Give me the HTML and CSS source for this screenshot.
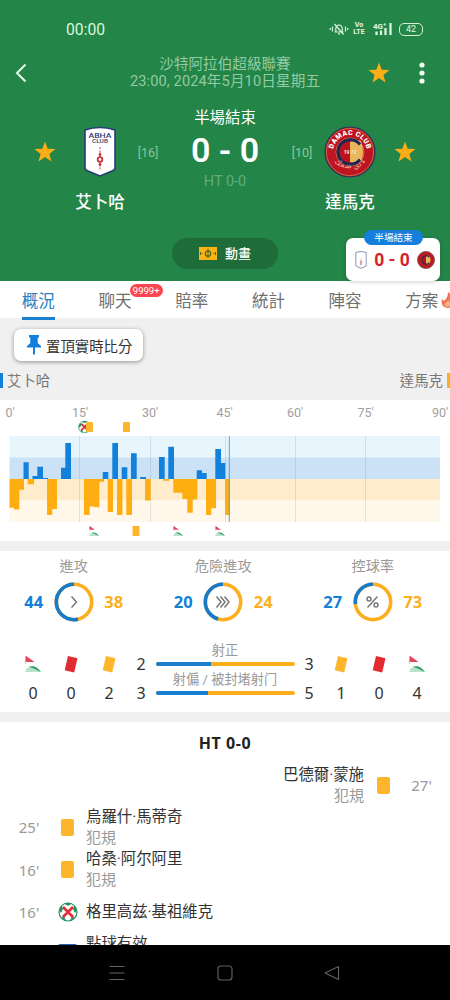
FILE: index.html
```html
<!DOCTYPE html>
<html lang="zh-Hant">
<head>
    <meta charset="UTF-8">
    <meta name="viewport" content="width=device-width, initial-scale=1.0">
    <title>艾卜哈 0 - 0 達馬克</title>
    <link rel="stylesheet" href="styles.css">
</head>
<body>
    <!-- shared icons -->
    <svg class="defs" width="0" height="0">
        <symbol id="star" viewBox="0 0 22 22">
            <path d="M11 0.5l2.7 7.3 7.8.3-6.1 4.8 2.1 7.6-6.5-4.4-6.5 4.4 2.1-7.6L.5 8.1l7.8-.3z" fill="#fdae17"/>
        </symbol>
        <symbol id="abha" viewBox="0 0 34 52">
            <path d="M2 4Q17-1 32 4V42Q32 44 29 45L17 50 5 45Q2 44 2 42Z" fill="#fff" stroke="#283a78" stroke-width="1.6"/>
            <path d="M17 21V45" stroke="#c9444a" stroke-width="1" stroke-dasharray="2 1.4"/>
            <path d="M17 26l1.500 2.500-1.500 2.500-1.500-2.500zM17 36l1.500 2.500-1.500 2.500-1.500-2.500z" fill="#c9343c"/>
            <circle cx="17" cy="33.500" r="2.300" fill="#fff" stroke="#c9343c" stroke-width="1.800"/>
        </symbol>
        <symbol id="damac" viewBox="0 0 52 52">
            <circle cx="26" cy="26" r="25" fill="#bd1620" stroke="#243a5c" stroke-width="1.2"/>
            <circle cx="26" cy="26" r="23.600" fill="none" stroke="#cf7650" stroke-width=".8"/>
            <circle cx="26" cy="26" r="14" fill="#b8141f" stroke="#d77a45" stroke-width="1"/>
            <path d="M26 16a12 12 0 0 1 11-1q4 11 0 21-5 2-11 0z" fill="#e9b65b"/>
            <path d="M36 18.500a12.300 12.300 0 1 0 0 15" fill="none" stroke="#1e2856" stroke-width="3"/>
        </symbol>
        <symbol id="corner" viewBox="0 0 18 18">
            <path d="M1.500.5L10.500 7H1.500z" fill="#e0475a"/>
            <path d="M1.500 1v8" stroke="#d9a9ad" stroke-width=".8"/>
            <path d="M1 17Q3 11 8 11T17 17z" fill="#b9e3cb"/>
            <path d="M5 11.800q7-2 12 5.200-6-3-12-5.200z" fill="#38a169"/>
        </symbol>
        <symbol id="card" viewBox="0 0 14 18">
            <path d="M4 1l9.500 2.200-3.300 14.300L.7 15.300z" fill="currentColor"/>
        </symbol>
        <symbol id="miss" viewBox="0 0 20 20">
            <circle cx="10" cy="10" r="9" fill="#fff" stroke="#1d9160" stroke-width="1.200"/>
            <path d="M6 1.800l4 2 4-2-4-1zM1 8l3-4 1 3-2 4zM19 8l-3-4-1 3 2 4zM4 17l1-4 3 5zM16 17l-1-4-3 5z" fill="#1d9160"/>
            <path d="M5 5l10 10M15 5L5 15" stroke="#e23239" stroke-width="2.800"/>
        </symbol>
    </svg>

    <div class="screen">
        <header class="header">
            <div class="status-bar">
                <span class="clock">00:00</span>
                <div class="status-icons">
                    <svg width="20" height="14" viewBox="0 0 20 14" fill="none" stroke="#d9f3df" stroke-width="1.200">
                        <path d="M5.500 10h9M6.800 10V6.500Q7 3.200 10 3q3 .2 3.200 3.500V10M9 11.800h2M5.500 2l9 10.500M3.500 4.500v5M1.300 6v2M16.500 4.500v5M18.700 6v2"/>
                    </svg>
                    <span class="volte"><b>Vo</b><b>LTE</b></span>
                    <svg class="signal" width="20" height="14" viewBox="0 0 20 14">
                        <text x="0" y="6.500" font-size="8" font-weight="700" fill="#e2f7e6">4G⁺</text>
                        <path d="M3.500 13v-3.500M8 13V8.500M12.500 13V6M17.500 13V1" stroke="#e2f7e6" stroke-width="2.200"/>
                    </svg>
                    <span class="battery">42</span>
                </div>
            </div>

            <div class="top-bar">
                <svg class="back" width="12" height="20" viewBox="0 0 12 20"><path d="M10.500 1.500L2 10l8.500 8.500" fill="none" stroke="#e8f8ea" stroke-width="2"/></svg>
                <div class="league">
                    <div>沙特阿拉伯超級聯賽</div>
                    <div class="kickoff">23:00, 2024年5月10日星期五</div>
                </div>
                <svg width="22" height="22"><use href="#star"/></svg>
                <svg class="more" width="6" height="22" fill="#f2fff2"><circle cx="3" cy="3" r="2.600"/><circle cx="3" cy="11" r="2.600"/><circle cx="3" cy="19" r="2.600"/></svg>
            </div>

            <div class="match">
                <svg class="fav" width="22" height="22"><use href="#star"/></svg>
                <div class="team">
                    <svg width="34" height="52" viewBox="0 0 34 52">
                        <use href="#abha"/>
                        <text x="17" y="12" font-size="7.500" font-weight="500" text-anchor="middle" textLength="23" lengthAdjust="spacingAndGlyphs" fill="#33427a">ABHA</text>
                        <text x="17" y="17" font-size="5" font-weight="500" text-anchor="middle" textLength="16" lengthAdjust="spacingAndGlyphs" fill="#33427a">CLUB</text>
                    </svg>
                    <div class="team-name">艾卜哈</div>
                </div>
                <div class="rank">[16]</div>
                <div class="result">
                    <div class="period">半場結束</div>
                    <div class="score">0 - 0</div>
                    <div class="half">HT 0-0</div>
                </div>
                <div class="rank">[10]</div>
                <div class="team">
                    <svg width="52" height="52" viewBox="0 0 52 52">
                        <path id="arc-top" d="M9 26a17 17 0 0 1 34 0" fill="none"/>
                        <path id="arc-bottom" d="M6 28a21 21 0 0 0 40 0" fill="none"/>
                        <use href="#damac"/>
                        <text x="26" y="28" font-size="5" font-weight="700" text-anchor="middle" fill="#f8e6cc">19 72</text>
                        <text font-size="7" font-weight="900" fill="#fff"><textPath href="#arc-top" startOffset="50%" text-anchor="middle" textLength="47">DAMAC CLUB</textPath></text>
                        <text font-size="8" fill="#f0a8a4"><textPath href="#arc-bottom" startOffset="50%" text-anchor="middle">نادي ضمك</textPath></text>
                    </svg>
                    <div class="team-name">達馬克</div>
                </div>
                <svg class="fav" width="22" height="22"><use href="#star"/></svg>
            </div>

            <div class="animation">
                <svg width="18" height="13" viewBox="0 0 18 13"><path d="M0 0h18v13H0z" fill="#fdb515"/><path d="M9 1.500v10M1.500 5v3M3 5.800v1.400M16.500 5v3M15 5.800v1.400" fill="none" stroke="#50671f"/><circle cx="9" cy="6.500" r="2.700" fill="none" stroke="#50671f" stroke-width="1.300"/></svg>
                <span>動畫</span>
            </div>

            <div class="mini">
                <span class="mini-label">半場結束</span>
                <svg width="12" height="18"><use href="#abha"/></svg>
                <span class="mini-score">0 - 0</span>
                <svg width="18" height="18"><use href="#damac"/></svg>
            </div>
        </header>

        <nav class="tabs">
            <div class="tab active"><span>概況</span></div>
            <div class="tab"><span>聊天</span><em>9999+</em></div>
            <div class="tab"><span>賠率</span></div>
            <div class="tab"><span>統計</span></div>
            <div class="tab"><span>陣容</span></div>
            <div class="tab"><span>方案</span>
                <svg class="flame" width="14" height="18" viewBox="0 0 14 18"><path d="M7 1q4 3 3 6l2-1q4 10-5 11Q-1 16 1 8l2 2Q7 7 7 1z" fill="#f1744b"/><path d="M7 8q1 3 3 4-1 4-4 4-4-1-2-4 3-1 3-4z" fill="#f7b08c"/></svg>
            </div>
        </nav>

        <section class="pin-area">
            <div class="pin">
                <svg width="14" height="20" viewBox="0 0 14 20"><path d="M2 0h10v2l-1.300 1v5l3.300 3v1.500H8V19l-1 1-1-1v-6.500H0V11l3.300-3V3L2 2z" fill="#1180dc"/></svg>
                <span>置頂實時比分</span>
            </div>
            <div class="sides">
                <span class="home">艾卜哈</span>
                <span class="away">達馬克</span>
            </div>
        </section>

        <section class="chart">
            <svg width="450" height="141" viewBox="0 400 450 141">
                <g class="axis">
                    <text x="10" y="417">0'</text>
                    <text x="80" y="417">15'</text>
                    <text x="150" y="417">30'</text>
                    <text x="224.500" y="417">45'</text>
                    <text x="295" y="417">60'</text>
                    <text x="365.500" y="417">75'</text>
                    <text x="440" y="417">90'</text>
                </g>
                <path d="M9.500 436H440v22H9.500z" fill="#e9f5fd"/>
                <path d="M9.500 457.500H440V479H9.500z" fill="#cbe2f6"/>
                <path d="M9.500 479H440v21.500H9.500z" fill="#feeccd"/>
                <path d="M9.500 500.500H440V522H9.500z" fill="#fff8ea"/>
                <path d="M79.500 436v86M150.500 436v86M225.500 436v86M295.500 436v86M365.500 436v86" stroke="#506478" stroke-opacity=".15"/>
                <!-- home pressure -->
                <path fill="#1181dc" d="M23.500 479V462.300H28.700V479zM32.500 479V476H37.300V466.700H43V478H48V479zM61 479V467.700H65.300V443H71V479zM102.700 479V472H108.300V479zM112.300 479V443H118V479zM121.700 479V467.300H127.300V479zM131 479V453.300H136.700V479zM140.300 479V477H146V479zM159 479V457H164.700V479zM168.300 479V446.700H174V479zM196.700 479V470.300H202V473H206.700V479zM215.300 479V449H221V463H225.300V479z"/>
                <!-- away pressure -->
                <path fill="#ffae12" d="M9.500 479V507.700H14V509.500H19.300V489.700H24V479zM27.700 479V484.300H34V479zM47 479V515H52.300V509H57V479zM84 479V515H89.700V506.500H94.300V507.300H99.300V481.700H104V479zM107.700 479V512H113V479zM117 479V515H122.500V479zM126.300 479V515H132V479zM145 479V500.500H150.700V479zM163.300 479V480.700H169.300V479zM173.300 479V492.700H182.300V499H187.300V512.700H192.700V499.500H197.300V479zM206 479V515H211.300V508.300H216V479zM225 479V515H230V479z"/>
                <path d="M229.300 436v86" stroke="#5ba3dc"/>
                <use href="#miss" x="78" y="420.500" width="13" height="13"/>
                <g fill="#fdb62b">
                    <rect x="86" y="422" width="7" height="10" rx="1"/>
                    <rect x="123" y="422" width="7" height="10" rx="1"/>
                    <rect x="132.500" y="526" width="7" height="10" rx="1"/>
                </g>
                <use href="#corner" x="88.500" y="525.500" width="11" height="11"/>
                <use href="#corner" x="172.500" y="525.500" width="11" height="11"/>
                <use href="#corner" x="214.500" y="525.500" width="11" height="11"/>
            </svg>
        </section>

        <section class="stats">
            <div class="gauges">
                <div class="gauge">
                    <h3>進攻</h3>
                    <b class="blue">44</b>
                    <svg width="40" height="40" viewBox="0 0 40 40">
                        <circle class="ring" cx="20" cy="20" r="17.700"/>
                        <circle class="ring part" cx="20" cy="20" r="17.700" pathLength="100" stroke-dasharray="53.700 100"/>
                        <path class="mark" d="M17.500 14.500l5 5.500-5 5.500"/>
                    </svg>
                    <b class="gold">38</b>
                </div>
                <div class="gauge">
                    <h3>危險進攻</h3>
                    <b class="blue">20</b>
                    <svg width="40" height="40" viewBox="0 0 40 40">
                        <circle class="ring" cx="20" cy="20" r="17.700"/>
                        <circle class="ring part" cx="20" cy="20" r="17.700" pathLength="100" stroke-dasharray="45.500 100"/>
                        <path class="mark" d="M13.500 14.500l4.500 5.500-4.500 5.500M17.500 14.500l4.500 5.500-4.500 5.500M21.500 14.500l4.500 5.500-4.500 5.500"/>
                    </svg>
                    <b class="gold">24</b>
                </div>
                <div class="gauge">
                    <h3>控球率</h3>
                    <b class="blue">27</b>
                    <svg width="40" height="40" viewBox="0 0 40 40">
                        <circle class="ring" cx="20" cy="20" r="17.700"/>
                        <circle class="ring part" cx="20" cy="20" r="17.700" pathLength="100" stroke-dasharray="27 100"/>
                        <path class="mark" d="M24.500 14.500l-10 11"/><circle class="mark" cx="16" cy="17" r="2"/><circle class="mark" cx="23" cy="23" r="2"/>
                    </svg>
                    <b class="gold">73</b>
                </div>
            </div>

            <div class="shots">
                <div class="counts left">
                    <svg width="18" height="18"><use href="#corner"/></svg>
                    <svg class="red" width="14" height="18"><use href="#card"/></svg>
                    <svg class="yellow" width="14" height="18"><use href="#card"/></svg>
                    <span>2</span>
                    <span>0</span>
                    <span>0</span>
                    <span>2</span>
                    <span>3</span>
                </div>
                <div class="bars">
                    <p>射正</p>
                    <div class="bar"><i style="width: 40%"></i></div>
                    <p>射偏 / 被封堵射门</p>
                    <div class="bar"><i style="width: 37.5%"></i></div>
                </div>
                <div class="counts right">
                    <span>3</span>
                    <svg class="yellow" width="14" height="18"><use href="#card"/></svg>
                    <svg class="red" width="14" height="18"><use href="#card"/></svg>
                    <svg width="18" height="18"><use href="#corner"/></svg>
                    <span>5</span>
                    <span>1</span>
                    <span>0</span>
                    <span>4</span>
                </div>
            </div>
        </section>

        <section class="events">
            <h2>HT 0-0</h2>
            <div class="event away-event">
                <div class="info"><strong>巴德爾·蒙施</strong><small>犯規</small></div>
                <div class="icon"><i class="yellow-card"></i></div>
                <time>27'</time>
            </div>
            <div class="event">
                <time>25'</time>
                <div class="icon"><i class="yellow-card"></i></div>
                <div class="info"><strong>烏羅什·馬蒂奇</strong><small>犯規</small></div>
            </div>
            <div class="event">
                <time>16'</time>
                <div class="icon"><i class="yellow-card"></i></div>
                <div class="info"><strong>哈桑·阿尔阿里</strong><small>犯規</small></div>
            </div>
            <div class="event">
                <time>16'</time>
                <div class="icon"><svg width="20" height="20"><use href="#miss"/></svg></div>
                <div class="info"><strong>格里高兹·基祖維克</strong></div>
            </div>
            <div class="event last">
                <time></time>
                <div class="icon"><i class="var-box"></i></div>
                <div class="info"><strong>點球有效</strong></div>
            </div>
        </section>

        <footer class="nav-bar">
            <svg width="16" height="16" viewBox="0 0 16 16"><path d="M.5 1.500h15M.5 8h15M.5 14.500h15"/></svg>
            <svg width="16" height="16" viewBox="0 0 16 16"><rect x="1" y="1" width="14" height="14" rx="3"/></svg>
            <svg width="16" height="16" viewBox="0 0 16 16"><path d="M14.500 1.500v13L1 8z" stroke-linejoin="round"/></svg>
        </footer>
    </div>
</body>
</html>
```
FILE: styles.css
```css
:root {
    --green: #238547;
    --blue: #1380d8;
    --gold: #fdae1c;
    --gray-bg: #f0f0f0;
    --text-muted: #999;
}

* {
    margin: 0;
    padding: 0;
    box-sizing: border-box;
}

body {
    font-family: Roboto, 'Noto Sans CJK TC', sans-serif;
    background: #fff;
    color: #333;
    overflow: hidden;
}

svg {
    display: block;
    flex: none;
}

.defs {
    position: absolute;
}

.screen {
    width: 450px;
    height: 1000px;
    display: flex;
    flex-direction: column;
    overflow: hidden;
}

/* Header */
.header {
    position: relative;
    flex: none;
    height: 281px;
    background: var(--green);
    color: #fff;
}

.status-bar {
    display: flex;
    align-items: center;
    justify-content: space-between;
    height: 50px;
    padding: 8px 27px 0 66px;
}

.clock {
    font-size: 15.7px;
    color: #d9f7df;
}

.status-icons {
    display: flex;
    align-items: center;
    color: #e2f7e6;
}

.volte {
    width: 12px;
    margin: 0 8px 0 4px;
    font-size: 7px;
    line-height: 7px;
    text-align: center;
}

.volte b {
    display: block;
}

.signal {
    margin-right: 6px;
}

.battery {
    width: 24px;
    height: 13px;
    border: 1.5px solid #d5f1da;
    border-radius: 5px;
    font-size: 9px;
    line-height: 11px;
    text-align: center;
}

.top-bar {
    display: flex;
    align-items: center;
    height: 44px;
    padding: 1px 25px 0 15px;
}

.league {
    flex: 1;
    padding-left: 55px;
    text-align: center;
    font-size: 14.6px;
    line-height: 17px;
    color: #93cba4;
    white-space: nowrap;
}

.kickoff {
    letter-spacing: 0.12px;
}

.top-bar .league + svg {
    margin: 0 29px 0 0;
}

.match {
    display: grid;
    grid-template-columns: 50px 60px 36px 1fr 36px 60px 50px;
    justify-items: center;
    align-items: start;
    height: 138px;
    padding: 6px 20px 0;
}

.fav {
    margin-top: 41px;
}

.team {
    display: flex;
    flex-direction: column;
    align-items: center;
    padding-top: 26px;
}

.team-name {
    margin-top: 13px;
    font-size: 16.5px;
    font-weight: 500;
    line-height: 24px;
    white-space: nowrap;
}

.rank {
    margin-top: 43px;
    font-size: 12.5px;
    line-height: 20px;
    color: #8cc59d;
}

.result {
    padding-top: 8px;
    text-align: center;
}

.period {
    font-size: 15.4px;
    line-height: 20px;
}

.score {
    margin-top: 2px;
    font-size: 34px;
    font-weight: 600;
    line-height: 40px;
}

.half {
    margin-top: 2px;
    font-size: 14.5px;
    line-height: 20px;
    color: #64ac7c;
}

.animation {
    display: flex;
    align-items: center;
    justify-content: center;
    gap: 8px;
    width: 106px;
    height: 31px;
    margin: 6px auto 0;
    border-radius: 16px;
    background: #1d6c3a;
    font-size: 13px;
    font-weight: 500;
}

.animation span {
    margin-top: -2px;
}

/* floating score widget */
.mini {
    position: absolute;
    left: 346px;
    top: 238px;
    display: flex;
    align-items: center;
    justify-content: space-between;
    width: 94px;
    height: 43px;
    padding: 0 5px 0 9px;
    border-radius: 7px;
    background: #fff;
    box-shadow: 0 1px 4px rgba(0, 0, 0, 0.2);
}

.mini-label {
    position: absolute;
    left: 18px;
    top: -8px;
    width: 59px;
    height: 15px;
    border-radius: 8px;
    background: #157fdb;
    font-size: 9.6px;
    line-height: 15px;
    text-align: center;
}

.mini-score {
    color: #d91e2a;
    font-size: 17.5px;
    font-weight: 700;
}

/* Tabs */
.tabs {
    display: flex;
    flex: none;
    height: 37px;
    background: #fff;
}

.tab {
    position: relative;
    display: flex;
    justify-content: center;
    flex: 0 0 76.7px;
    font-size: 16.5px;
    line-height: 42px;
    color: #6f6f6f;
}

.tab span {
    height: 39px;
}

.tab.active {
    color: #277fc5;
    z-index: 1;
}

.tab.active span {
    border-bottom: 3px solid #197fcf;
}

.tab em {
    position: absolute;
    left: 53px;
    top: 3px;
    width: 33px;
    height: 13px;
    border-radius: 7px;
    background: #fb4550;
    color: #fff;
    font-size: 9.5px;
    font-style: normal;
    line-height: 13px;
    text-align: center;
}

.flame {
    position: absolute;
    left: 58px;
    top: 10px;
}

/* Pin button and team names */
.pin-area {
    flex: none;
    height: 82px;
    padding-top: 11px;
    background: var(--gray-bg);
}

.pin {
    display: flex;
    align-items: center;
    gap: 5px;
    width: 129px;
    height: 32px;
    margin-left: 14px;
    padding-left: 13px;
    border-radius: 7px;
    background: #fff;
    box-shadow: 0 1px 4px rgba(0, 0, 0, 0.4);
    font-size: 14.4px;
    white-space: nowrap;
}

.sides {
    display: flex;
    justify-content: space-between;
    margin-top: 12px;
    font-size: 14.4px;
    line-height: 17px;
    color: #777;
}

.home {
    height: 15px;
    padding-left: 4px;
    border-left: 3px solid var(--blue);
}

.away {
    height: 15px;
    padding-right: 4px;
    border-right: 3px solid var(--gold);
}

/* Pressure chart */
.chart {
    flex: none;
    height: 151px;
    border-bottom: 10px solid var(--gray-bg);
}

.axis text {
    font-size: 12.5px;
    fill: #a0a0a0;
    text-anchor: middle;
}

/* Match stats */
.stats {
    flex: none;
    height: 171px;
    border-bottom: 10px solid var(--gray-bg);
}

.gauges {
    display: grid;
    grid-template-columns: repeat(3, 149.5px);
    height: 91px;
    margin-left: -1px;
}

.gauge {
    display: grid;
    grid-template-columns: 40px 40px 40px;
    grid-template-rows: 30px 42px;
    justify-content: center;
    align-items: center;
    justify-items: center;
    font-family: 'Noto Sans', 'Noto Sans CJK TC', sans-serif;
    font-size: 16.5px;
}

.gauge h3 {
    grid-column: 1 / 4;
    font-size: 14.2px;
    font-weight: 400;
    line-height: 20px;
    color: var(--text-muted);
}

.gauge b {
    margin-top: -1px;
}

.blue {
    color: var(--blue);
}

.gold {
    color: var(--gold);
}

.ring {
    fill: none;
    stroke: var(--gold);
    stroke-width: 3.6;
}

/* home share runs counter-clockwise from the top */
.ring.part {
    stroke: #187bc9;
    transform: matrix(0, -1, -1, 0, 40, 40);
}

.mark {
    fill: none;
    stroke: #777;
    stroke-width: 1.5;
}

.shots {
    display: flex;
    justify-content: space-between;
    height: 70px;
    padding: 0 14px;
}

.counts {
    display: grid;
    grid-template-columns: 38px 38px 38px 26px;
    grid-template-rows: 28px 29px;
    justify-items: center;
    align-items: center;
    align-content: start;
    padding-top: 8px;
    font-family: 'Noto Sans', sans-serif;
    font-size: 16px;
    line-height: 22px;
}

.counts.right {
    grid-template-columns: 26px 38px 38px 38px;
}

.red {
    color: #e12b31;
}

.yellow {
    color: #fdb62b;
}

.bars {
    width: 139px;
    text-align: center;
    font-size: 13.2px;
    color: var(--text-muted);
}

.bars p {
    line-height: 17px;
    height: 20px;
    white-space: nowrap;
}

.bar {
    height: 4px;
    margin-bottom: 5px;
    border-radius: 2px;
    background: var(--gold);
    overflow: hidden;
}

.bar i {
    display: block;
    height: 4px;
    background: #187fd0;
}

/* Events */
.events {
    flex: none;
    height: 223px;
    overflow: hidden;
}

.events h2 {
    height: 42px;
    font-family: 'Noto Sans', sans-serif;
    font-size: 16px;
    letter-spacing: 0.6px;
    line-height: 42px;
    text-align: center;
    color: #222;
}

.event {
    display: flex;
    align-items: center;
    height: 42.3px;
}

.event time {
    width: 58px;
    font-family: 'Noto Sans', sans-serif;
    font-size: 15px;
    text-align: center;
    color: var(--text-muted);
}

.icon {
    display: flex;
    justify-content: center;
    width: 19px;
}

.yellow-card {
    width: 13px;
    height: 17px;
    border-radius: 2px;
    background: #fdb62b;
}

.info {
    padding: 1px 0 0 9px;
    font-size: 15.4px;
}

.info strong,
.info small {
    display: block;
    font-size: inherit;
    font-weight: 400;
    line-height: 21px;
}

.info small {
    font-size: 15px;
    color: var(--text-muted);
}

.away-event {
    justify-content: flex-end;
}

.away-event time {
    width: 57px;
}

.away-event .info {
    padding: 1px 10px 0 0;
    text-align: right;
}

.event.last {
    align-items: flex-start;
}

.var-box {
    width: 19px;
    height: 14px;
    margin-top: 11px;
    border-radius: 2px;
    background: #1b64b8;
}

/* Android navigation */
.nav-bar {
    display: flex;
    align-items: center;
    justify-content: space-between;
    flex: none;
    height: 55px;
    padding: 0 110px 0 109px;
    background: #000;
}

.nav-bar svg {
    fill: none;
    stroke: #626262;
    stroke-width: 1.1;
}
```
